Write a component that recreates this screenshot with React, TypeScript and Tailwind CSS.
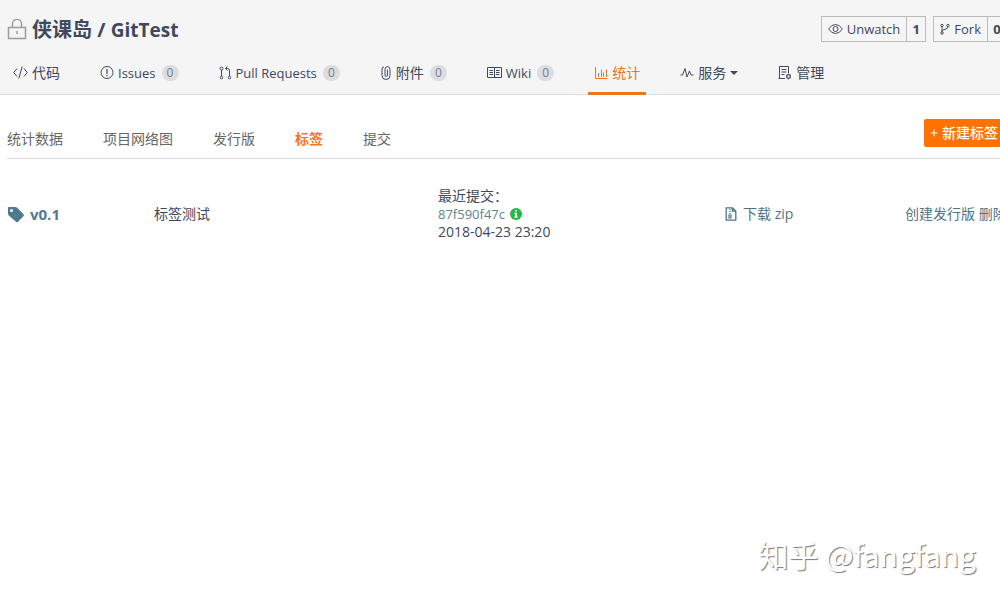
import type { ReactNode } from 'react'

function Icon({
  children,
  className,
  viewBox = '0 0 14 14',
}: {
  children: ReactNode
  className: string
  viewBox?: string
}) {
  return (
    <svg
      viewBox={viewBox}
      className={`shrink-0 ${className}`}
      fill="none"
      stroke="currentColor"
      strokeWidth="1"
      aria-hidden="true"
    >
      {children}
    </svg>
  )
}

const icons = {
  code: (
    <Icon className="h-3.5 w-[15px]" viewBox="0 0 15 14">
      <path d="M4 2.500.8 6.500 4 10.500M11 2.500l3.200 4L11 10.500M9.200.5 5.800 12.500" />
    </Icon>
  ),
  issue: (
    <Icon className="h-3.5 w-3.5">
      <circle cx="7" cy="6.5" r="6" />
      <path d="M7 3v5M7 9v1.2" strokeWidth="1.2" />
    </Icon>
  ),
  pull: (
    <Icon className="h-3.5 w-[13px]" viewBox="0 0 13 14">
      <circle cx="2.5" cy="2.5" r="1.5" />
      <circle cx="2.5" cy="11.5" r="1.3" />
      <circle cx="10.5" cy="11.5" r="1.3" />
      <path d="M2.5 4v6M10.5 10V4.5q0-2-2-2H6.5M8.5.5l-2 2 2 2" />
    </Icon>
  ),
  clip: (
    <Icon className="h-3.5 w-3" viewBox="0 0 12 14">
      <path d="M2 3v6.5a4 4 0 0 0 8 0V3.2a2.5 2.5 0 0 0-5 0v6a1.2 1.2 0 0 0 2.4 0V3.5M2 3a2.2 2.2 0 0 1 2-2" />
    </Icon>
  ),
  wiki: (
    <Icon className="h-3.5 w-[15px]" viewBox="0 0 15 14">
      <path d="M.5 1.5h14v10H.5zM7.5 1.5v10M2.5 4.500H6M2.5 6.500H6M2.5 8.500H6M9 4.500h3.500M9 6.500h3.500M9 8.500h3.500" />
    </Icon>
  ),
  chart: (
    <Icon className="h-3.5 w-3.5">
      <path d="M1.500 1v11.500H13.500M4.500 7v4M7.500 3.500V11M9.500 6.500V11M12.500 3.500V11" />
    </Icon>
  ),
  pulse: (
    <Icon className="h-3.5 w-3.5">
      <path d="M.5 9h2L5 2.5l2 8.5 2.5-6L11 9h2.5" />
    </Icon>
  ),
  manage: (
    <Icon className="h-3.5 w-3.5">
      <path d="M7 12.5H1.5v-12h9V7M3.5 3.5h5M3.5 6h5M3.5 8.5h3M.5 12.5H7" />
      <circle cx="10.5" cy="10.5" r="1.8" strokeWidth="1.2" />
      <path d="M10.5 8V7.4M10.5 13.5V13M8.2 9.2l.6.3M12.3 11.5l.6.3M12.8 9.2l-.6.3M8.7 11.5l-.6.3" />
    </Icon>
  ),
  eye: (
    <Icon className="h-3.5 w-[15px]" viewBox="0 0 15 14">
      <path d="M.6 7Q3.5 2.5 7.5 2.5T14.4 7Q11.5 11.5 7.5 11.5T.6 7z" />
      <circle cx="7.5" cy="7" r="2.5" />
    </Icon>
  ),
  fork: (
    <Icon className="h-3 w-2.5" viewBox="0 0 10 12">
      <circle cx="2" cy="2.5" r="1.2" />
      <circle cx="8" cy="2.5" r="1.2" />
      <circle cx="2" cy="10" r="1.2" />
      <path d="M2 3.7v5M8 3.7q0 2-3 2.6T2 8.7" />
    </Icon>
  ),
  zip: (
    <Icon className="h-3.5 w-3" viewBox="0 0 12 14">
      <path d="M1.2.8h6.3l3.3 3.3v9.1H1.2zM7.3.8v3.4h3.5" strokeWidth="1.3" />
      <path d="M5 2v1M5 4v1M5 6v1M4 8h2v3H4z" strokeWidth="1.2" />
    </Icon>
  ),
}

type Tab = {
  label: string
  icon: ReactNode
  latin?: boolean
  count?: number
  active?: boolean
  menu?: boolean
}

const tabs: Tab[] = [
  { label: '代码', icon: icons.code },
  { label: 'Issues', icon: icons.issue, latin: true, count: 0 },
  { label: 'Pull Requests', icon: icons.pull, latin: true, count: 0 },
  { label: '附件', icon: icons.clip, count: 0 },
  { label: 'Wiki', icon: icons.wiki, latin: true, count: 0 },
  { label: '统计', icon: icons.chart, active: true },
  { label: '服务', icon: icons.pulse, menu: true },
  { label: '管理', icon: icons.manage },
]

const subTabs = ['统计数据', '项目网络图', '发行版', '标签', '提交']

function CountButton({
  icon,
  label,
  count,
}: {
  icon: ReactNode
  label: string
  count: number
}) {
  return (
    <div className="flex h-[26px] border border-[#b9bbbe] text-[13px]">
      <button type="button" className="flex items-center gap-1 px-1.5">
        {icon}
        {label}
      </button>
      <a
        href="#"
        className="flex w-[19px] items-center justify-center border-l border-[#b9bbbe] font-bold"
      >
        {count}
      </a>
    </div>
  )
}

export default function App() {
  return (
    <div className="relative min-h-screen overflow-hidden bg-white font-['Open_Sans','Noto_Sans_CJK_SC',sans-serif] text-sm text-[#40485b]">
      <header className="border-b border-[#dcddde] bg-[#f5f5f5]">
        <div className="ml-[7px] w-full pt-3.5">
          <div className="flex h-[30px] items-center justify-between">
            <h1 className="flex items-center gap-[5px] pt-0.5 text-xl font-bold whitespace-nowrap">
              <Icon
                className="h-[22px] w-5 text-[#9b9da3]"
                viewBox="0 0 20 22"
              >
                <path
                  d="M1.5 8.500h17v11h-17zM5.500 8.500V4.800a4.500 4.500 0 0 1 9 0v3.700M10 12v3"
                  strokeWidth="1.5"
                />
              </Icon>
              <span>
                <a href="#">侠课岛</a> /{' '}
                <a href="#" className="text-[19px]">
                  GitTest
                </a>
              </span>
            </h1>
            <div className="flex gap-[7px]">
              <CountButton icon={icons.eye} label="Unwatch" count={1} />
              <CountButton icon={icons.fork} label="Fork" count={0} />
            </div>
          </div>
          <nav className="mt-2.5 -mb-px flex gap-7">
            {tabs.map((tab) => (
              <a
                key={tab.label}
                href="#"
                className={`flex h-[41px] items-center gap-1 border-b-[3px] px-1.5 whitespace-nowrap ${
                  tab.active
                    ? 'border-[#e8781c] text-[#e8781c]'
                    : 'border-transparent'
                }`}
              >
                {tab.icon}
                <span className={tab.latin ? 'text-[13px]' : ''}>
                  {tab.label}
                </span>
                {tab.count !== undefined && (
                  <span className="ml-0.5 flex h-4 w-[17px] items-center justify-center rounded-full bg-[#dcdde1] text-xs text-[#777d8c]">
                    {tab.count}
                  </span>
                )}
                {tab.menu && (
                  <svg
                    viewBox="0 0 8 4"
                    className="h-1 w-2"
                    fill="currentColor"
                    aria-hidden="true"
                  >
                    <path d="M0 0h8L4 4z" />
                  </svg>
                )}
              </a>
            ))}
          </nav>
        </div>
      </header>

      <main className="ml-[7px] w-full">
        <div className="flex items-start justify-between border-b border-[#d9d9da] pt-6">
          <nav className="flex h-[39px] items-center gap-10 text-[#666]">
            {subTabs.map((label) => (
              <a
                key={label}
                href="#"
                className={
                  label === '标签' ? 'font-bold text-[#f5781e]' : undefined
                }
              >
                {label}
              </a>
            ))}
          </nav>
          <button
            type="button"
            className="flex h-7 items-center gap-1 rounded-xs bg-[#fe7300] pr-[9px] pl-1.5 text-white"
          >
            <Icon className="h-2 w-2" viewBox="0 0 8 8">
              <path d="M4 .5v7M.5 4h7" strokeWidth="1.2" />
            </Icon>
            <span className="font-medium">新建标签</span>
          </button>
        </div>

        <table className="mt-7 w-full table-fixed text-left whitespace-nowrap">
          <tbody>
            <tr>
              <td className="w-[14.7%]">
                <a
                  href="#"
                  className="flex items-center gap-[5px] pt-0.5 text-[15px] font-bold text-[#4f7a8b]"
                >
                  <svg
                    viewBox="0 0 18 18"
                    className="h-[18px] w-[18px]"
                    fill="currentColor"
                    aria-hidden="true"
                  >
                    <path
                      fillRule="evenodd"
                      d="M2 1h6.500q.8 0 1.400.6l6.700 6.700q.8.8 0 1.600l-5.700 6q-.8.8-1.600 0L1.800 9.400Q1 8.600 1 7.600V2q0-1 1-1zM4.500 3a1.500 1.500 0 1 0 0 3 1.500 1.500 0 0 0 0-3z"
                    />
                  </svg>
                  v0.1
                </a>
              </td>
              <td className="w-[28.4%]">标签测试</td>
              <td className="w-[28.7%] leading-[18px]">
                <div>最近提交：</div>
                <div className="flex items-center gap-[5px]">
                  <a href="#" className="text-[13px] text-[#5f828f]">
                    87f590f47c
                  </a>
                  <svg
                    viewBox="0 0 12 12"
                    className="h-3 w-3"
                    aria-hidden="true"
                  >
                    <circle cx="6" cy="6" r="6" fill="#21ba45" />
                    <path
                      d="M5 2h2v1.600H5zM4.300 4.800H7v3.700h.8v1.200H4.300V8.500H5V6h-.7z"
                      fill="#fff"
                    />
                  </svg>
                </div>
                <div>2018-04-23 23:20</div>
              </td>
              <td className="w-[18%]">
                <a
                  href="#"
                  className="flex items-center gap-1.5 text-[#4f7484]"
                >
                  {icons.zip}
                  下载 zip
                </a>
              </td>
              <td className="text-[#4f7484]">
                <a href="#">创建发行版</a> <a href="#">删除</a>
              </td>
            </tr>
          </tbody>
        </table>
      </main>

      <div className="absolute right-6 bottom-7 font-['Noto_Sans_CJK_SC',sans-serif] text-3xl leading-9 text-white [text-shadow:1px_1px_1px_#777]">
        知乎 @fangfang
      </div>
    </div>
  )
}
